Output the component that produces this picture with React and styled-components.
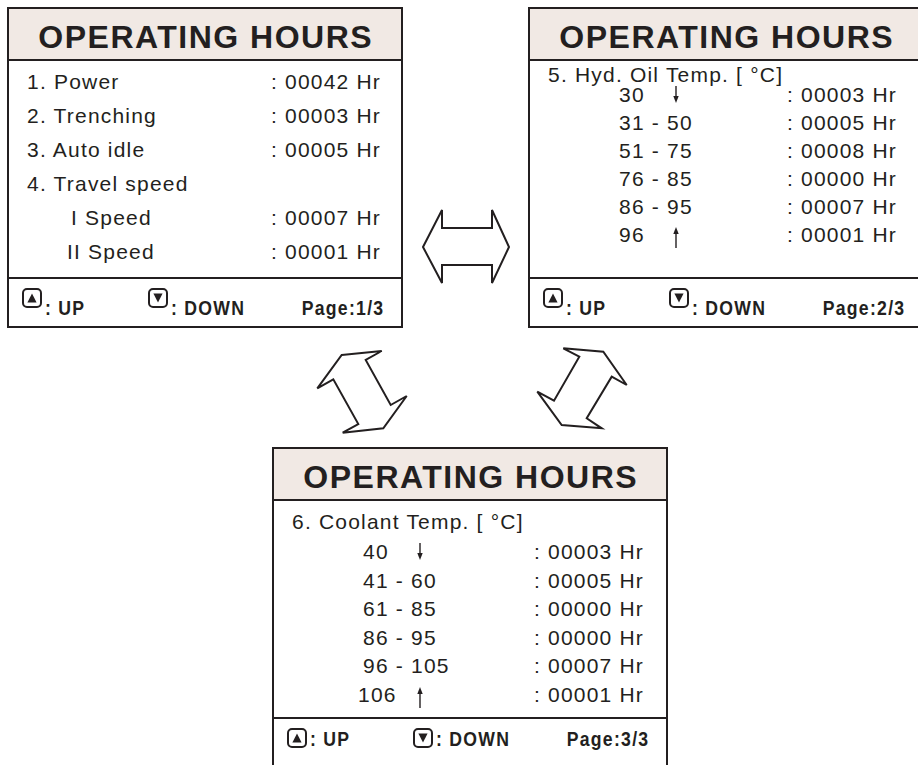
import React from 'react';
import styled, { createGlobalStyle } from 'styled-components';

const ink = '#231f20';

const GlobalStyle = createGlobalStyle`
  html, body {
    margin: 0;
    padding: 0;
    background: #fff;
    overflow: hidden;
  }
  body {
    font-family: "Liberation Sans", Arial, sans-serif;
    color: ${ink};
  }
`;

const StyledPage = styled.div`
  width: 918px;
  height: 765px;
  overflow: hidden;
  padding: 7px 0 0 7px;
  box-sizing: border-box;
`;

const StyledTopRow = styled.div`
  display: flex;
  width: max-content;
`;

const StyledMiddleRow = styled.div`
  display: flex;
  gap: 120px;
  height: 119px;
  padding: 16px 0 0 305px;
  box-sizing: border-box;
`;

const StyledBottomRow = styled.div`
  padding-left: 265px;
`;

const StyledPanel = styled.div`
  width: 396px;
  height: 321px;
  flex-shrink: 0;
  border: 2px solid ${ink};
  box-sizing: border-box;
  display: flex;
  flex-direction: column;
  background: #fff;
`;

const StyledHeader = styled.div`
  height: 50px;
  flex-shrink: 0;
  background: #f1e9e4;
  border-bottom: 2px solid ${ink};
  text-align: center;
  font-weight: 700;
  font-size: 32px;
  letter-spacing: 1.5px;
  text-indent: 1.5px;
  line-height: 56px;
  white-space: nowrap;
`;

const StyledBody = styled.div`
  height: 218px;
  flex-shrink: 0;
  box-sizing: border-box;
  border-bottom: 2px solid ${ink};
  padding: ${(p) => p.$padTop}px 0 0 18px;
  font-size: 21px;
  letter-spacing: 1.2px;
  line-height: ${(p) => p.$lineHeight}px;
  white-space: nowrap;
`;

const StyledRow = styled.div`
  display: grid;
  grid-template-columns: ${(p) => p.$labelWidth}px auto;
`;

const StyledLabel = styled.span`
  padding-left: ${(p) => p.$indent || 0}px;
`;

const StyledTempTitle = styled.div`
  margin-bottom: ${(p) => p.$gap}px;
`;

const StyledRange = styled.span`
  padding-left: 71px;
`;

const StyledRangeValue = styled.span`
  display: inline-block;
  width: ${(p) => 53 - (p.$shift || 0)}px;
  margin-left: ${(p) => p.$shift || 0}px;
  white-space: nowrap;
`;

const StyledTick = styled.svg`
  vertical-align: ${(p) => p.$drop}px;
`;

const StyledFooter = styled.div`
  flex: 1;
  display: flex;
  align-items: flex-start;
  padding: 9px 17px 0 13px;
  font-weight: 700;
  font-size: 21px;
  letter-spacing: 1.5px;
  line-height: 20px;
  white-space: nowrap;
`;

const StyledKey = styled.div`
  display: flex;
  align-items: flex-start;
  gap: 3px;
  width: ${(p) => (p.$width ? `${p.$width}px` : 'auto')};
  flex: ${(p) => (p.$width ? 'none' : '1')};
`;

const StyledKeyBox = styled.div`
  width: 16px;
  height: 16px;
  border: 2px solid ${ink};
  border-radius: 5px;
  display: flex;
  align-items: center;
  justify-content: center;
`;

const StyledCondensed = styled.span`
  display: inline-block;
  margin-top: ${(p) => p.$drop}px;
  transform: scaleX(0.84);
  transform-origin: ${(p) => (p.$alignRight ? 'right' : 'left')} center;
`;

function DownTick() {
  return (
    <StyledTick $drop={-1} width="8" height="17" viewBox="0 0 8 17">
      <line x1="4" y1="0" x2="4" y2="11" stroke={ink} strokeWidth="1.4" />
      <path d="M1.3 10 L6.7 10 L4 17 Z" fill={ink} />
    </StyledTick>
  );
}

function UpTick() {
  return (
    <StyledTick $drop={-6} width="8" height="21" viewBox="0 0 8 21">
      <path d="M4 0 L6.7 7 L1.3 7 Z" fill={ink} />
      <line x1="4" y1="6" x2="4" y2="21" stroke={ink} strokeWidth="1.4" />
    </StyledTick>
  );
}

function Triangle({ up }) {
  return (
    <svg width="10" height="10" viewBox="0 0 10 10">
      <path d={up ? 'M5 0.5 L9.6 9.5 L0.4 9.5 Z' : 'M0.4 0.5 L9.6 0.5 L5 9.5 Z'} fill={ink} />
    </svg>
  );
}

function Footer({ page, drop }) {
  return (
    <StyledFooter>
      <StyledKey $width={126}>
        <StyledKeyBox>
          <Triangle up />
        </StyledKeyBox>
        <StyledCondensed $drop={drop}>: UP</StyledCondensed>
      </StyledKey>
      <StyledKey>
        <StyledKeyBox>
          <Triangle />
        </StyledKeyBox>
        <StyledCondensed $drop={drop}>: DOWN</StyledCondensed>
      </StyledKey>
      <StyledCondensed $drop={drop} $alignRight>
        Page:{page}
      </StyledCondensed>
    </StyledFooter>
  );
}

function HoursPanel({ rows }) {
  return (
    <StyledPanel>
      <StyledHeader>OPERATING HOURS</StyledHeader>
      <StyledBody $padTop={4} $lineHeight={34}>
        {rows.map((row) => (
          <StyledRow key={row.label} $labelWidth={244}>
            <StyledLabel $indent={row.indent}>{row.label}</StyledLabel>
            <span>{row.value}</span>
          </StyledRow>
        ))}
      </StyledBody>
      <Footer page="1/3" drop={10} />
    </StyledPanel>
  );
}

function TempPanel({ title, rows, page, layout }) {
  return (
    <StyledPanel>
      <StyledHeader>OPERATING HOURS</StyledHeader>
      <StyledBody $padTop={layout.padTop} $lineHeight={layout.lineHeight}>
        <StyledTempTitle $gap={layout.titleGap}>{title}</StyledTempTitle>
        {rows.map((row) => (
          <StyledRow key={row.range} $labelWidth={layout.labelWidth}>
            <StyledRange>
              <StyledRangeValue $shift={row.shift}>{row.range}</StyledRangeValue>
              {row.tick === 'down' && <DownTick />}
              {row.tick === 'up' && <UpTick />}
            </StyledRange>
            <span>{row.value}</span>
          </StyledRow>
        ))}
      </StyledBody>
      <Footer page={page} drop={layout.footerDrop} />
    </StyledPanel>
  );
}

function SideArrow() {
  return (
    <svg width="125" height="80" viewBox="0 0 125 80" style={{ marginTop: 200, flexShrink: 0 }}>
      <polygon
        points="20,40 39,3 39,21 89,21 89,3 106,40 89,76 89,58 39,58 39,76"
        fill="#fff"
        stroke={ink}
        strokeWidth="2"
      />
    </svg>
  );
}

function LeftSwapArrow() {
  return (
    <svg width="100" height="96" viewBox="0 0 100 96">
      <polygon
        points="29.7,11 69.7,7 53.7,16 78.7,61 94.7,52 71.3,84.3 30.7,88.7 46.3,80 21.3,35.3 5.3,44.3"
        fill="#fff"
        stroke={ink}
        strokeWidth="2"
      />
    </svg>
  );
}

function RightSwapArrow() {
  return (
    <svg width="100" height="96" viewBox="0 0 100 96">
      <polygon
        points="31.3,4.3 71.3,7.7 94.7,41 79.7,32.7 54.7,74.3 69.7,84.3 29.7,81 5.3,47.7 22,56.7 47.3,12.7"
        fill="#fff"
        stroke={ink}
        strokeWidth="2"
      />
    </svg>
  );
}

const hourRows = [
  { label: '1. Power', value: ': 00042 Hr' },
  { label: '2. Trenching', value: ': 00003 Hr' },
  { label: '3. Auto idle', value: ': 00005 Hr' },
  { label: '4. Travel speed', value: '' },
  { label: 'I Speed', value: ': 00007 Hr', indent: 44 },
  { label: 'II Speed', value: ': 00001 Hr', indent: 40 },
];

const oilRows = [
  { range: '30', value: ': 00003 Hr', tick: 'down' },
  { range: '31 - 50', value: ': 00005 Hr' },
  { range: '51 - 75', value: ': 00008 Hr' },
  { range: '76 - 85', value: ': 00000 Hr' },
  { range: '86 - 95', value: ': 00007 Hr' },
  { range: '96', value: ': 00001 Hr', tick: 'up' },
];

const coolantRows = [
  { range: '40', value: ': 00003 Hr', tick: 'down' },
  { range: '41 - 60', value: ': 00005 Hr' },
  { range: '61 - 85', value: ': 00000 Hr' },
  { range: '86 - 95', value: ': 00000 Hr' },
  { range: '96 - 105', value: ': 00007 Hr' },
  { range: '106', value: ': 00001 Hr', tick: 'up', shift: -5 },
];

const oilLayout = { padTop: 0, lineHeight: 28, titleGap: -8, labelWidth: 239, footerDrop: 10 };
const coolantLayout = { padTop: 7, lineHeight: 28.6, titleGap: 1.5, labelWidth: 242, footerDrop: 1 };

function App() {
  return (
    <StyledPage>
      <GlobalStyle />
      <StyledTopRow>
        <HoursPanel rows={hourRows} />
        <SideArrow />
        <TempPanel title="5. Hyd. Oil Temp. [ °C]" rows={oilRows} page="2/3" layout={oilLayout} />
      </StyledTopRow>
      <StyledMiddleRow>
        <LeftSwapArrow />
        <RightSwapArrow />
      </StyledMiddleRow>
      <StyledBottomRow>
        <TempPanel title="6. Coolant Temp. [ °C]" rows={coolantRows} page="3/3" layout={coolantLayout} />
      </StyledBottomRow>
    </StyledPage>
  );
}

export default App;
